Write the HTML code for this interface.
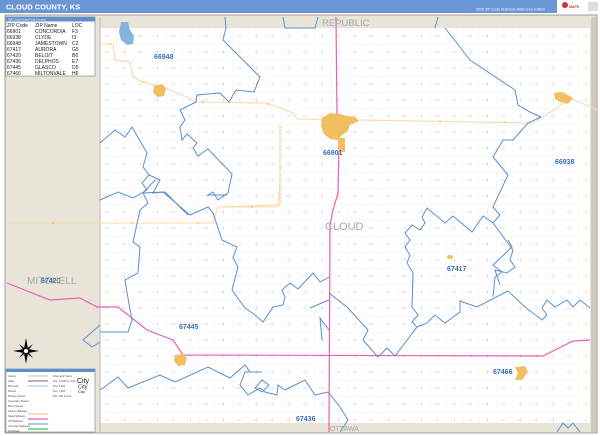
<!DOCTYPE html>
<html><head><meta charset="utf-8"><style>
html,body{margin:0;padding:0;width:600px;height:436px;overflow:hidden;background:#fff;font-family:"Liberation Sans",sans-serif}
</style></head><body>
<svg width="600" height="436" viewBox="0 0 600 436" xmlns="http://www.w3.org/2000/svg" font-family="Liberation Sans, sans-serif">
<defs>
<pattern id="g" width="16.5" height="16" patternUnits="userSpaceOnUse" x="100" y="28">
<path d="M0 0H16.5M0 0V16" stroke="#ececec" stroke-width="0.8" fill="none"/>
<path d="M8 6V10M4 8H7" stroke="#cfcfcf" stroke-width="0.6"/>
</pattern>
</defs>
<rect width="600" height="436" fill="#fff"/>
<rect x="0" y="0" width="600" height="13" fill="#6a96d6"/>
<text x="6" y="9.5" font-size="7.5" font-weight="bold" fill="#fff">CLOUD COUNTY, KS</text>
<text x="476" y="10.5" font-size="3.6" fill="#fff">2026 ZIP Code Business Reference Edition</text>
<rect x="557" y="0" width="43" height="14" fill="#fff"/>
<circle cx="565" cy="5" r="3" fill="#c33"/>
<text x="569" y="8" font-size="3.5" fill="#c33" font-weight="bold">MAPS</text>
<rect x="588" y="2" width="10" height="9" fill="#ddd"/>
<rect x="5" y="15" width="592" height="418" fill="#e8e4d8" stroke="#888" stroke-width="0.8"/>
<rect x="100" y="28" width="490" height="395" fill="#fff"/>
<rect x="100" y="28" width="490" height="395" fill="url(#g)"/>
<rect x="591" y="17" width="5" height="415" fill="#cfcbbf"/>
<line x1="100" y1="17" x2="100" y2="432" stroke="#999" stroke-width="0.6"/>
<path d="M121 22 L128 22 L130 30 L134 36 L133 44 L127 45 L121 40 L119 32Z" fill="#86b3dd"/>
<g fill="none" stroke="#f9d8b0" stroke-width="1.1">
<path d="M100 44 L113 44 L115 60 L130 62 L133 77 L143 82 L165 88 L177 93 L193 100 L197 102 L267 103 L293 113 L297 119 L533 123 L557 108 L570 98 L597 110"/>
<path d="M280 128 L280 205 L218 207 L213 223 L7 223"/>
<path d="M218 207 L278 207 L280 180"/>
</g>
<g fill="#e8d000"><circle cx="110" cy="44" r="0.9"/><circle cx="144" cy="82" r="0.9"/><circle cx="203" cy="102" r="0.9"/><circle cx="268" cy="104" r="0.9"/><circle cx="280" cy="127" r="0.9"/><circle cx="280" cy="168" r="0.9"/><circle cx="53" cy="223" r="0.9"/><circle cx="132" cy="223" r="0.9"/><circle cx="198" cy="223" r="0.9"/><circle cx="252" cy="207" r="0.9"/><circle cx="440" cy="121" r="0.9"/><circle cx="505" cy="122" r="0.9"/></g>
<g fill="none" stroke="#e85fb8" stroke-width="1.2">
<path d="M336 17 L337 115 L339 145 L338 193 L333 210 L330 225 L329 432"/>
<path d="M7 283 L50 300 L80 298 L97 307 L118 307 L147 330 L173 340 L183 355 L543 356 L573 341 L590 340"/>
</g>
<g fill="none" stroke="#5b8fd0" stroke-width="1">
<path d="M225 17 L226 28 L223 40 L260 77 L254 92 L236 90 L229 102 L220 93 L197 95 L196 102 L180 110 L185 120 L180 127 L182 140 L187 134 L197 143 L193 148 L198 156 L208 149 L232 174 L228 193 L218 200 L213 192 L208 195 L227 195"/>
<path d="M283 17 L285 28 L315 28 L318 17"/>
<path d="M438 17 L435 28 M445 28 L470 60 L515 90 L518 105 L530 112 L541 117"/>
<path d="M100 143 L115 130 L125 137 L132 127 L147 153 L143 167 L149 175 L142 183 L147 190 L133 198 L118 192 L100 200"/>
<path d="M149 175 L160 180 L153 193 L165 192 L188 215"/>
<path d="M155 180 L143 193 L148 203 L140 210 L133 242 L140 247 L138 273 L125 280 L128 298 L132 320 L128 332 L100 332"/>
<path d="M100 325 L83 340 L92 347 L100 342"/>
<path d="M143 193 L163 192 L190 215 L208 207 L213 213 L222 240 L237 247 L233 258 L238 267 L232 290 L245 308 L255 315 L263 322 L273 307 L283 305 L285 297 L282 290 L290 283 L298 289 L313 273 L320 282 L329 277"/>
<path d="M329 293 L347 307 L368 330 L363 340 L378 357 L387 348 L395 356 L417 327 L412 322 L418 315 L412 307 L413 273 L407 263 L410 255 L405 247 L410 240 L405 233 L412 225 L420 230 L425 223 L422 217 L427 208 L445 223 L453 216 L472 232 L483 216 L493 223 L500 215 L493 207 L508 175 L493 157 L503 140 L513 140 L528 123 L541 117"/>
<path d="M493 223 L513 250 L510 260 L515 267 L507 273 L495 270 L500 285"/>
<path d="M417 327 L427 323 L435 315 L445 323 L460 312 L460 301 L477 307 L508 291 L525 307 L542 320 L547 315 L542 308 L547 300 L555 307 L567 300 L573 307 L580 300 L590 308"/>
<path d="M493 297 L495 277 L502 272 L493 265 L512 247 L508 240"/>
<path d="M329 300 L310 308 M329 330 L320 318 L322 340"/>
<path d="M100 390 L118 377 L128 388 L160 375 L175 382 L208 367 L230 378 L245 365 L250 372"/>
<path d="M262 372 L245 372 L240 385 L248 395 L260 388 L265 392 L277 395 L278 385 L285 390 L305 380 L315 395 L328 392 L340 407 L348 420 L340 432"/>
<path d="M255 388 L262 380 L269 385 L262 392Z"/>
<path d="M557 432 L563 423 L568 428 L573 423 L580 432"/>
</g>
<g fill="#f0c060">
<path d="M322 118 L330 113 L340 114 L347 116 L355 117 L359 121 L350 125 L348 131 L342 135 L338 140 L330 139 L324 134 L321 126Z"/>
<rect x="338" y="138" width="7" height="14"/>
<path d="M154 86 L162 84 L166 88 L164 96 L157 97 L153 92Z"/>
<path d="M554 93 L562 92 L568 95 L573 98 L568 104 L560 102 L555 99Z"/>
<path d="M175 355 L183 354 L187 358 L185 365 L178 366 L174 361Z"/>
<path d="M515 367 L525 366 L528 372 L522 380 L515 380 L518 373Z"/>
<ellipse cx="450" cy="257" rx="3" ry="2"/>
</g>
<g font-size="7" font-weight="bold" fill="#3d6fb5">
<text x="154" y="59">66948</text>
<text x="323" y="155">66901</text>
<text x="555" y="164">66938</text>
<text x="447" y="271">67417</text>
<text x="179" y="329">67445</text>
<text x="41" y="283">67420</text>
<text x="493" y="374">67466</text>
<text x="296" y="421">67436</text>
</g>
<g fill="#a8a8a8">
<text x="325" y="230" font-size="11">CLOUD</text>
<text x="322" y="26" font-size="9.5">REPUBLIC</text>
<text x="27" y="284" font-size="10">MITCHELL</text>
<text x="330" y="431" font-size="7">OTTAWA</text>
</g>
<rect x="6" y="17" width="89" height="59" fill="#fff" stroke="#666" stroke-width="0.5"/>
<rect x="6" y="17" width="89" height="4.5" fill="#5b8fd0"/>
<text x="8" y="20.5" font-size="3" fill="#fff">ZIP Code Index/Grid Locator</text>
<g font-size="5" fill="#222">
<text x="7" y="27">ZIP Code</text><text x="35" y="27">ZIP Name</text><text x="72" y="27">LOC</text>
<text x="7" y="33">66901</text><text x="35" y="33">CONCORDIA</text><text x="72" y="33">F3</text>
<text x="7" y="39">66938</text><text x="35" y="39">CLYDE</text><text x="72" y="39">I3</text>
<text x="7" y="45">66948</text><text x="35" y="45">JAMESTOWN</text><text x="72" y="45">C2</text>
<text x="7" y="51">67417</text><text x="35" y="51">AURORA</text><text x="72" y="51">G5</text>
<text x="7" y="57">67420</text><text x="35" y="57">BELOIT</text><text x="72" y="57">B6</text>
<text x="7" y="63">67436</text><text x="35" y="63">DELPHOS</text><text x="72" y="63">E7</text>
<text x="7" y="69">67445</text><text x="35" y="69">GLASCO</text><text x="72" y="69">D5</text>
<text x="7" y="75">67466</text><text x="35" y="75">MILTONVALE</text><text x="72" y="75">H6</text>
</g>
<g transform="translate(26,351)" fill="#000">
<path d="M0 -13 L2 -2 L13 0 L2 2 L0 13 L-2 2 L-13 0 L-2 -2Z"/>
<path d="M-7 -7 L1 -1 L7 7 L-1 1Z M7 -7 L1 1 L-7 7 L-1 -1Z"/>
<circle r="2.5" fill="#fff" stroke="#000" stroke-width="0.6"/>
</g>
<rect x="6" y="369" width="89" height="63" fill="#fff" stroke="#666" stroke-width="0.5"/>
<rect x="6" y="369" width="89" height="3" fill="#5b8fd0"/>
<g stroke-width="1.3" fill="none">
<line x1="28" y1="376" x2="48" y2="376" stroke="#ccc"/>
<line x1="28" y1="381" x2="48" y2="381" stroke="#888"/>
<line x1="28" y1="386" x2="48" y2="386" stroke="#b8d0ea"/>
<line x1="28" y1="414" x2="48" y2="414" stroke="#f5c98e"/>
<line x1="28" y1="419" x2="48" y2="419" stroke="#e85fb8"/>
<line x1="28" y1="424" x2="48" y2="424" stroke="#6ab0e0"/>
<line x1="28" y1="429" x2="48" y2="429" stroke="#4c4"/>
</g>
<g font-size="2.5" fill="#444">
<text x="8" y="377">County</text><text x="8" y="382">State</text><text x="8" y="387">ZIP Code</text>
<text x="8" y="392">Streets</text><text x="8" y="397">Primary Streets</text><text x="8" y="402">Secondary Streets</text>
<text x="8" y="407">Minor Streets</text><text x="8" y="412">County Highways</text><text x="8" y="417">State Highways</text>
<text x="8" y="422">US Highways</text><text x="8" y="427">Interstate Highways</text><text x="8" y="432">Toll Roads</text>
<text x="53" y="377">Cities and Towns</text>
<text x="53" y="382">Pop. 10,000 or more</text><text x="53" y="387">Pop. 5,000</text><text x="53" y="392">Pop. 1,000</text><text x="53" y="397">Pop. 100 or less</text>
</g>
<g fill="#222"><text x="77" y="383" font-size="7">City</text><text x="78" y="388.5" font-size="5.5">City</text><text x="78" y="393" font-size="4">City</text></g>
</svg>
</body></html>
